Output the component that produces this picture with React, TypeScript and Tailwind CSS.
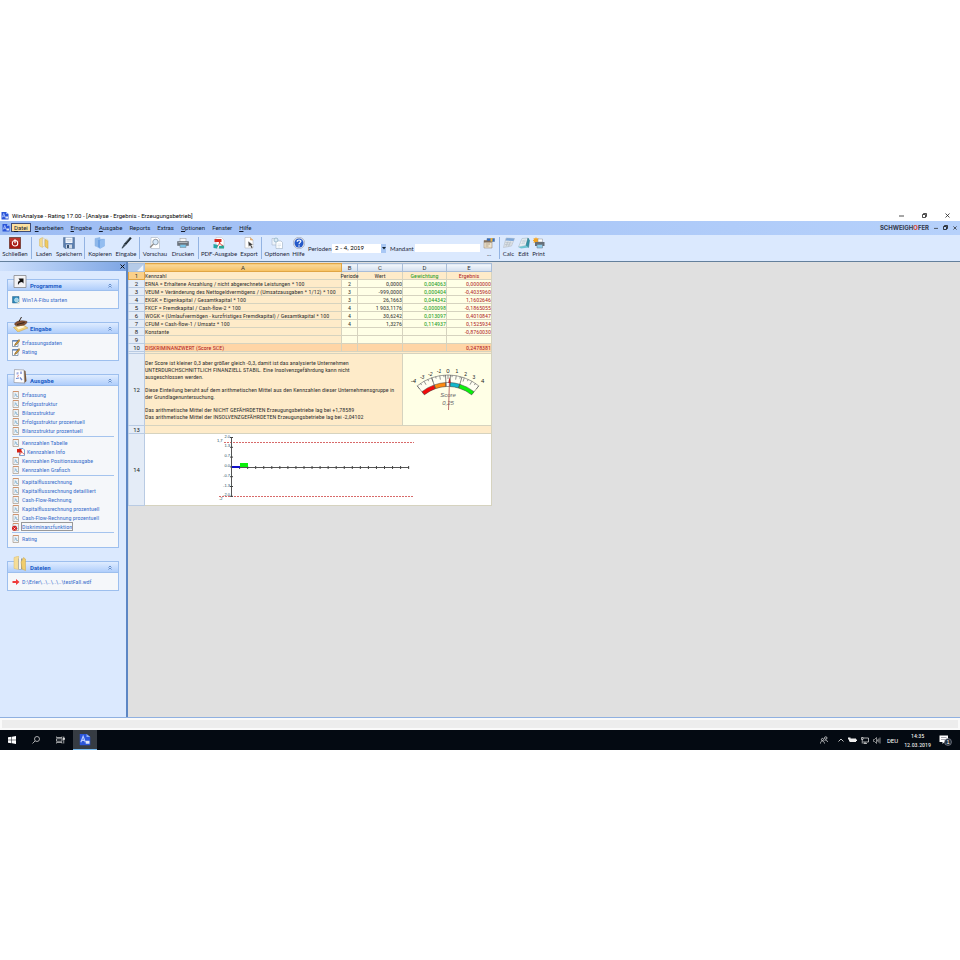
import React, { useState } from "react";
import type { ReactNode } from "react";

type IconName =
  | "power" | "folders" | "save" | "copy" | "pen" | "preview" | "printer" | "pdf" | "export"
  | "options" | "help" | "client" | "calc" | "book" | "sunprint";

const glyphs: Record<IconName, ReactNode> = {
  power: (
    <>
      <rect x="0" y="0" width="24" height="24" rx="3" fill="#a81a14" stroke="#6a625c" strokeWidth="2.5" />
      <rect x="2" y="2" width="20" height="8" fill="#c84a40" opacity=".6" />
      <circle cx="12" cy="12.5" r="5.5" fill="none" stroke="#fff" strokeWidth="2.2" />
      <path d="M12 4.500v8" stroke="#fff" strokeWidth="2.4" />
    </>
  ),
  folders: (
    <>
      <path d="M3 4l6-3v20l-6-3z" fill="#f3d98a" stroke="#d9b865" />
      <path d="M9 3l3-1v17H9z" fill="#fff" stroke="#c7b68a" />
      <path d="M14 5l6 2v16l-6-4z" fill="#f0cb63" stroke="#c9a040" />
      <path d="M15 3l4 1v4" fill="none" stroke="#e8dcb4" />
    </>
  ),
  save: (
    <>
      <path d="M1 1h22v22H4l-3-3z" fill="#5c7fae" stroke="#4b6890" />
      <rect x="5" y="1" width="14" height="11" fill="#f4f8ff" />
      <path d="M7 5h10M7 8h10" stroke="#9ab" />
      <rect x="6" y="15" width="12" height="8" fill="#cfd9e6" />
      <rect x="8" y="16" width="4" height="6" fill="#385274" />
    </>
  ),
  copy: (
    <>
      <path d="M2 3l10-2v20L2 18z" fill="#8fb8ea" stroke="#8ab0e2" />
      <path d="M7 5l14-1v14l-9 5-5-3z" fill="#6fa3e4" stroke="#9cc0ee" />
      <path d="M12 7l9-3v14l-9 5z" fill="#93bdf0" />
    </>
  ),
  pen: (
    <>
      <path d="M20 0l3.500 2.500L12 16l-4-2.500z" fill="#1f2a33" />
      <path d="M8 13.500l4 2.500-7 7-2-.5z" fill="#3c4a56" />
      <path d="M18 3l-7 9" stroke="#8fa0ad" />
    </>
  ),
  preview: (
    <>
      <path d="M4 1h13l4 4v18H4z" fill="#fff" stroke="#9aa4b0" />
      <circle cx="13" cy="10" r="5.5" fill="#d6e8fa" stroke="#7c8b9a" strokeWidth="1.6" />
      <path d="M9 14l-7 7" stroke="#8e8a86" strokeWidth="2.4" />
    </>
  ),
  printer: (
    <>
      <rect x="6" y="3" width="12" height="7" fill="#f7f7f7" stroke="#9a9a9a" />
      <path d="M1 9h22v8H1z" fill="#6b737c" stroke="#5d646c" />
      <path d="M3 11h18" stroke="#c8ced4" strokeWidth="1.5" />
      <path d="M6 15h12v6H6z" fill="#79c3e8" stroke="#768088" />
    </>
  ),
  pdf: (
    <>
      <path d="M6 1h11l5 5v16H6z" fill="#fff" stroke="#b9b9b9" />
      <path d="M3 4h14v6H3z" fill="#d92c20" />
      <path d="M8 19c3-2 5-5 5-9 1 4 3 6 7 7" fill="none" stroke="#d92c20" strokeWidth="2" />
      <path d="M1 14l9 2-2 7-7-1z" fill="#26a6a6" />
      <path d="M12 18l10-1v6H12z" fill="#2aa894" />
    </>
  ),
  export: (
    <>
      <path d="M4 1h11l5 5v16H4z" fill="#fff" stroke="#a7a7a7" />
      <path d="M15 1v5h5" fill="#f6b873" stroke="#c78d4c" />
      <path d="M10 8l1 12 3-3 3 6 3-1-3-6h4z" fill="#3a3a3a" stroke="#fff" />
    </>
  ),
  options: (
    <>
      <path d="M2 3h10v13H2z" fill="#edf3fa" stroke="#9aabc0" />
      <path d="M10 8h10l3 3v12H10z" fill="#fff" stroke="#8ea3b5" />
      <circle cx="10" cy="6" r="4" fill="#dcebf5" stroke="#8eb0c4" strokeWidth="1.5" />
      <path d="M13 14h7M13 17h7M13 20h5" stroke="#c3d1df" />
    </>
  ),
  help: (
    <>
      <circle cx="12" cy="12" r="11.5" fill="#dfe3ea" stroke="#8b93a6" />
      <circle cx="12" cy="12" r="9" fill="#2358c9" />
      <path d="M5 9a8 7 0 0 1 14 0" fill="#7ea5ef" opacity=".7" />
      <path d="M8.500 9.500c0-5 7.500-4.500 7-.5-.3 2.300-3.500 2.500-3.500 5.500" fill="none" stroke="#fff" strokeWidth="2.200" />
      <circle cx="12" cy="18" r="1.500" fill="#fff" />
    </>
  ),
  client: (
    <>
      <path d="M2 7h16v15H2z" fill="#eee4cf" stroke="#8c7a62" />
      <path d="M8 3h15v6H8z" fill="#2c6ecb" stroke="#5c6f85" />
      <path d="M2 7h13l3 4H2z" fill="#7e6d5d" />
      <path d="M5 14h9M5 18h6" stroke="#a08e75" strokeWidth="1.500" />
      <path d="M15 2h4v7h-4z" fill="#efb23a" />
    </>
  ),
  calc: (
    <>
      <path d="M6 2l17 1-6 15-16 3z" fill="#dfe4e9" stroke="#aab3bd" />
      <path d="M7 2l16 1-2 5-16-1z" fill="#7ea7d8" />
      <path d="M5 11l12 1M4 15l11 1M10 9l-4 10M15 9l-4 10" stroke="#b3bcc5" strokeWidth="1.300" />
    </>
  ),
  book: (
    <>
      <path d="M8 3l12-1-4 15-15 3z" fill="#e5edf2" stroke="#9eb2be" />
      <path d="M20 2l3 5-2 14-5-4z" fill="#3494a8" stroke="#25707f" />
      <path d="M1 20l15-3 5 4-15 2z" fill="#6fc5d2" />
      <path d="M9 7l7-1M8 10l7-1M7 13l7-1" stroke="#a9bac5" />
    </>
  ),
  sunprint: (
    <>
      <path d="M6 0l1.500 3L11 2l-1 3 3 2-3 1.500 1 3.500-3.500-1L6 14l-2-3-3 1 1-3.500L-1 7l3-2-1-3 3.500 1z" fill="#f4a522" />
      <path d="M10 4h9v6h-9z" fill="#fff" stroke="#8d8d8d" />
      <path d="M4 10h19v8H4z" fill="#666e77" />
      <path d="M8 15h11v7H8z" fill="#8fcdec" stroke="#6c757d" />
    </>
  ),
};

function Icon({ name }: { name: IconName }) {
  return (
    <svg viewBox="0 0 24 24" className="size-3 shrink-0" aria-hidden="true">
      {glyphs[name]}
    </svg>
  );
}

function AppLogo({ className }: { className: string }) {
  return (
    <svg viewBox="0 0 16 16" className={className} aria-hidden="true">
      <path d="M1 0h9l5 4v11H1z" fill="#2b55d8" />
      <path d="M2.500 11l3-8 3 8M3.500 8.500h4" fill="none" stroke="#b9ccff" strokeWidth="1.500" />
      <path d="M10 0v4h5" fill="#8fb0f5" />
      <path d="M9 9h5v4H9z" fill="#dfe6f5" />
    </svg>
  );
}

function Tool({ icon, label, width }: { icon: IconName; label: string; width: string }) {
  return (
    <button type="button" className={`flex shrink-0 flex-col items-center gap-px whitespace-nowrap pt-0.5 ${width}`}>
      <Icon name={icon} />
      <span className="leading-2">{label}</span>
    </button>
  );
}

function Sep() {
  return <span className="mx-px my-0.5 w-px shrink-0 bg-[#93b3e2]" />;
}

function Toolbar() {
  const [client, setClient] = useState("");
  return (
    <div className="flex h-[27px] shrink-0 border-b border-[#64809c] bg-[#dbe9fe] font-['Lato','Roboto',sans-serif] text-[6px] text-[#1c2638]">
      <Tool icon="power" label="Schließen" width="w-[30px]" />
      <Sep />
      <Tool icon="folders" label="Laden" width="w-[22px]" />
      <Tool icon="save" label="Speichern" width="w-[28px]" />
      <Sep />
      <Tool icon="copy" label="Kopieren" width="w-[28px]" />
      <Tool icon="pen" label="Eingabe" width="w-6" />
      <Sep />
      <Tool icon="preview" label="Vorschau" width="w-[28px]" />
      <Tool icon="printer" label="Drucken" width="w-[28px]" />
      <Sep />
      <Tool icon="pdf" label="PDF-Ausgabe" width="w-[38px]" />
      <Tool icon="export" label="Export" width="w-[22px]" />
      <Sep />
      <Tool icon="options" label="Optionen" width="w-[28px]" />
      <Tool icon="help" label="Hilfe" width="w-[15px]" />
      <div className="flex items-center pl-0.5">
        <label htmlFor="perioden" className="w-6">Perioden</label>
        <div className="relative flex w-[54px]">
          <select id="perioden" className="h-[9px] w-full appearance-none bg-white pl-[3px] leading-2 text-black">
            <option>2 - 4, 2019</option>
          </select>
          <span className="pointer-events-none absolute right-0 top-0 flex h-[9px] w-[5px] items-center justify-center bg-[#a9c8f5]">
            <svg viewBox="0 0 4 4" className="size-1"><path d="M0 1h4L2 3.500z" fill="#123" /></svg>
          </span>
        </div>
        <label htmlFor="mandant" className="w-[29px] pl-1">Mandant</label>
        <input
          id="mandant"
          value={client}
          onChange={(e) => setClient(e.target.value)}
          className="h-2 w-[65px] bg-white px-0.5 outline-none"
        />
      </div>
      <Tool icon="client" label="..." width="w-[18px]" />
      <Sep />
      <Tool icon="calc" label="Calc" width="w-[15px]" />
      <Tool icon="book" label="Edit" width="w-[15px]" />
      <Tool icon="sunprint" label="Print" width="w-[15px]" />
    </div>
  );
}

type ItemIcon = "report" | "edit" | "program" | "pdf" | "error" | "arrow";

function ItemGlyph({ kind }: { kind: ItemIcon }) {
  return (
    <svg viewBox="0 0 16 16" className="size-2 shrink-0" aria-hidden="true">
      {(kind === "report" || kind === "error") && (
        <>
          <path d="M2 1h11v14H2z" fill="#eef2f6" stroke="#a6998a" strokeWidth="1.400" />
          <path d="M2 1h11" stroke="#d48a5c" strokeWidth="1.600" />
          <path d="M5 6h3l1 5h3M5 11l3-5" fill="none" stroke="#8fb9d4" strokeWidth="1.800" />
        </>
      )}
      {kind === "error" && (
        <>
          <circle cx="5" cy="10.500" r="5" fill="#d42020" />
          <path d="M3 9l4 4M7 9l-4 4" stroke="#fff" strokeWidth="1.200" />
        </>
      )}
      {kind === "edit" && (
        <>
          <path d="M1 3h11v12H1z" fill="#fff" stroke="#5f7896" strokeWidth="1.400" />
          <path d="M1 3h11v2H1z" fill="#3d6db5" />
          <path d="M14 1l2 2-8 9-3 1 1-3z" fill="#e5a632" stroke="#4a3a20" />
        </>
      )}
      {kind === "program" && (
        <>
          <path d="M1 1h13v13H1z" fill="#2c86b8" stroke="#296388" />
          <circle cx="9" cy="8" r="4" fill="#9fcfe6" stroke="#dff" />
          <path d="M8 15l7-5v5z" fill="#e9e4d0" />
        </>
      )}
      {kind === "pdf" && (
        <>
          <path d="M5 1h7l3 3v11H5z" fill="#fff" stroke="#4a7cc0" strokeWidth="1.400" />
          <path d="M0 2h9v7H0z" fill="#d62318" />
          <path d="M5 14c3-3 4-6 4-8 1 4 3 5 6 6" fill="none" stroke="#d62318" strokeWidth="1.400" />
        </>
      )}
      {kind === "arrow" && <path d="M1 6h7V2l7 6-7 6v-4H1z" fill="#ef3b3b" />}
    </svg>
  );
}

type Entry = { icon: ItemIcon; text: string; indent?: boolean; active?: boolean } | "line";

const report = (text: string): Entry => ({ icon: "report", text });

const panels: { title: string; art: ReactNode; entries: Entry[] }[] = [
  {
    title: "Programme",
    art: (
      <>
        <path d="M2 3h24v24H2z" fill="#f3f3f5" stroke="#88898d" strokeWidth="1.600" />
        <path d="M10 22c-1-6 1-8 4-9l-3-4h10v10l-3-3c-4 0-6 2-8 6z" fill="#111" />
      </>
    ),
    entries: [{ icon: "program", text: "Win1A-Fibu starten" }],
  },
  {
    title: "Eingabe",
    art: (
      <>
        <path d="M1 21l18-6 11 7-20 8z" fill="#f2d37c" stroke="#c8a14e" />
        <path d="M7 20l12-3 5 3-13 5z" fill="#fff7df" />
        <path d="M3 14c4-7 15-8 25-5 0 5-6 8-13 8-4 1-10 2-12-3z" fill="#845032" stroke="#4c2c1a" />
        <path d="M12 9l5-9M8 15l15-4" stroke="#33261d" strokeWidth="2" />
      </>
    ),
    entries: [{ icon: "edit", text: "Erfassungsdaten" }, { icon: "edit", text: "Rating" }],
  },
  {
    title: "Ausgabe",
    art: (
      <>
        <path d="M20 2l5 2 2 20-5 5z" fill="#7a5636" />
        <path d="M3 1l19 1 1 26-21-1z" fill="#fdfdff" stroke="#8c8b92" strokeWidth="1.200" />
        <path d="M7 7l4-1v5H7zM14 5h4v5h-4z" fill="#a3aedf" />
        <path d="M6 19l6-1M14 17l4 5" stroke="#6d87cf" strokeWidth="2.500" />
        <path d="M8 15l4-2" stroke="#e09090" strokeWidth="2" />
      </>
    ),
    entries: [
      report("Erfassung"),
      report("Erfolgsstruktur"),
      report("Bilanzstruktur"),
      report("Erfolgsstruktur prozentuell"),
      report("Bilanzstruktur prozentuell"),
      "line",
      report("Kennzahlen Tabelle"),
      { icon: "pdf", text: "Kennzahlen Info", indent: true },
      report("Kennzahlen Positionsausgabe"),
      report("Kennzahlen Grafisch"),
      "line",
      report("Kapitalflussrechnung"),
      report("Kapitalflussrechnung detailliert"),
      report("Cash-Flow-Rechnung"),
      report("Kapitalflussrechnung prozentuell"),
      report("Cash-Flow-Rechnung prozentuell"),
      { icon: "error", text: "Diskriminanzfunktion", active: true },
      "line",
      report("Rating"),
    ],
  },
  {
    title: "Dateien",
    art: (
      <>
        <path d="M2 3l9-3v27l-9-2z" fill="#f5dd98" stroke="#dcbd6c" />
        <path d="M11 5h8v22h-8z" fill="#8c97a4" />
        <path d="M12 4h4v22h-4z" fill="#f3f4f6" />
        <path d="M16 12l5-9 4 3v23l-7-3z" fill="#f0cd6c" stroke="#c8a44c" />
      </>
    ),
    entries: [{ icon: "arrow", text: "D:\\Erler\\..\\..\\..\\..\\testFall.wdf" }],
  },
];

function Panel({ title, art, entries }: { title: string; art: ReactNode; entries: Entry[] }) {
  return (
    <section className="relative border border-[#9dbfee] bg-[#f5f7fa]">
      <svg viewBox="0 0 30 30" className="absolute -top-1.5 left-[5px] size-[15px]" aria-hidden="true">{art}</svg>
      <h2 className="flex h-[11px] items-center justify-between border-b border-[#9dbfee] bg-gradient-to-b from-[#dfecff] to-[#b0cefb] pl-[22px] pr-1.5 font-['Roboto',sans-serif] text-[6px] font-bold text-[#215dc6]">
        {title}
        <svg viewBox="0 0 8 10" className="h-[5px] w-1" aria-hidden="true">
          <path d="M1 5l3-3 3 3M1 9l3-3 3 3" fill="none" stroke="#4674b8" strokeWidth="1.500" />
        </svg>
      </h2>
      <ul className="px-1 py-1">
        {entries.map((e, i) =>
          e === "line" ? (
            <li key={i} className="my-px h-px bg-[#a5c4ee]" />
          ) : (
            <li key={i} className={`flex h-[9px] items-center whitespace-nowrap ${e.indent ? "pl-[5px]" : ""}`}>
              <a href="#" className="flex items-center gap-0.5">
                <ItemGlyph kind={e.icon} />
                <span className={e.active ? "outline outline-[#999]" : ""}>{e.text}</span>
              </a>
            </li>
          ),
        )}
      </ul>
    </section>
  );
}

function Sidebar() {
  return (
    <aside className="w-32 shrink-0 border-r-2 border-[#5c86c4] bg-[#dbe9fe] font-['Roboto_Condensed','Roboto',sans-serif] text-[6px] leading-[7px] text-[#3b70cc]">
      <div className="flex h-[9px] items-center justify-end bg-gradient-to-r from-[#cfe1fc] to-[#7ea6e4]">
        <button type="button" aria-label="Schließen" className="mr-px">
          <svg viewBox="0 0 5 5" className="size-[5px]"><path d="M.5.5l4 4M4.500.5l-4 4" stroke="#111" /></svg>
        </button>
      </div>
      <div className="flex flex-col gap-[13px] px-[7px] pt-2">
        {panels.map((p) => <Panel key={p.title} {...p} />)}
      </div>
    </aside>
  );
}

const rows: [string, string, string, string, string][] = [
  ["ERNA = Erhaltene Anzahlung / nicht abgerechnete Leistungen * 100", "2", "0,0000", "0,004063", "0,0000000"],
  ["VEUM = Veränderung des Nettogeldvermögens / (Umsatzausgaben * 1/12) * 100", "3", "-999,0000", "0,000404", "-0,4035960"],
  ["EKGK = Eigenkapital / Gesamtkapital * 100", "3", "26,1663", "0,044342", "1,1602646"],
  ["FKCF = Fremdkapital / Cash-flow-2 * 100", "4", "1 903,1176", "-0,000098", "-0,1865055"],
  ["WOGK = (Umlaufvermögen - kurzfristiges Fremdkapital) / Gesamtkapital * 100", "4", "30,6242", "0,013097", "0,4010847"],
  ["CFUM = Cash-flow-1 / Umsatz * 100", "4", "1,3276", "0,114937", "0,1525934"],
  ["Konstante", "", "", "", "-0,8760030"],
  ["", "", "", "", ""],
];

const polar = (value: number, r: number) => {
  const a = (value / 4) * 0.68;
  return [45 + r * Math.sin(a), 70 - r * Math.cos(a)] as const;
};

const band = (from: number, to: number, r1: number, r2: number) => {
  const [a, b] = polar(from, r2);
  const [c, d] = polar(to, r2);
  const [e, f] = polar(to, r1);
  const [g, h] = polar(from, r1);
  return `M${a} ${b}A${r2} ${r2} 0 0 1 ${c} ${d}L${e} ${f}A${r1} ${r1} 0 0 0 ${g} ${h}Z`;
};

const gaugeBands: [number, number, string][] = [
  [-4, -2, "#f30a0a"],
  [-2, -0.3, "#ff8a10"],
  [-0.3, 0.3, "#ffffff"],
  [0.3, 1.7, "#12b8cc"],
  [1.7, 4, "#0bf00b"],
];

function Gauge() {
  const values = [-4, -3, -2, -1, 0, 1, 2, 3, 4];
  return (
    <svg viewBox="0 0 89 71" className="mx-auto block h-[71px] w-[89px] font-['Liberation_Sans',sans-serif]" role="img" aria-label="Score 0,25">
      <path d={band(-4, 4, 38, 49)} fill="#fffff2" stroke="#777" strokeWidth=".7" />
      {Array.from({ length: 17 }, (_, i) => -4 + i / 2).map((v) => {
        const [x1, y1] = polar(v, 49);
        const [x2, y2] = polar(v, v % 1 ? 47 : 45);
        return <line key={v} x1={x1} y1={y1} x2={x2} y2={y2} stroke="#666" strokeWidth=".7" />;
      })}
      {gaugeBands.map(([a, b, c]) => <path key={a} d={band(a, b, 37.5, 41.5)} fill={c} stroke="#444" strokeWidth=".5" />)}
      {[-2, -0.3, 0.3, 1.7].map((v) => {
        const [x1, y1] = polar(v, 49);
        const [x2, y2] = polar(v, 38);
        return <line key={v} x1={x1} y1={y1} x2={x2} y2={y2} stroke="#555" strokeWidth=".7" />;
      })}
      {values.map((v) => {
        const [x, y] = polar(v, Math.abs(v) === 4 ? 55 : 53);
        return (
          <text key={v} x={x} y={y + 1.500} textAnchor="middle" fontSize={v === 0 || Math.abs(v) === 4 ? 6 : 5} fontStyle={v < 0 ? "italic" : "normal"} fill="#222">
            {v}
          </text>
        );
      })}
      <text x="45" y="43" textAnchor="middle" fontSize="6" fontStyle="italic" fill="#666">Score</text>
      <text x="45" y="51" textAnchor="middle" fontSize="6" fontStyle="italic" fill="#666">0,25</text>
      <path d="M46.500 26l-1 30" stroke="#b05050" strokeWidth=".8" />
      <path d="M46.500 23l1.200 6h-2.400z" fill="#c02020" />
    </svg>
  );
}

function ScoreChart() {
  const marks = ["2.0", "1.3", "0.7", "0.0", "-0.7", "-1.3", "-2.0"];
  return (
    <svg viewBox="0 0 346 71" className="block h-[71px] w-full font-['Liberation_Sans',sans-serif]" role="img" aria-label="Score je Periode">
      <path d="M79 8.500h190M74 62.500h195" stroke="#d86a6a" strokeDasharray="2 1" />
      <path d="M86.500 3v60M86 33.500h178" stroke="#555" />
      {marks.map((m, i) => (
        <g key={m}>
          <line x1="85" x2="88" y1={3.500 + i * 9.800} y2={3.500 + i * 9.800} stroke="#444" />
          <text x="85" y={3.500 + i * 9.800} textAnchor="end" fontSize="4" fill="#234a58">{m}</text>
        </g>
      ))}
      {Array.from({ length: 22 }, (_, i) => (
        <line key={i} x1={94.600 + i * 8.050} x2={94.600 + i * 8.050} y1="32" y2="35" stroke="#444" />
      ))}
      <rect x="87" y="32" width="8" height="2" fill="#1010c8" />
      <rect x="95" y="29" width="8" height="4" fill="#0bf00b" />
      <text x="72" y="8" fontSize="4" fill="#234a58">1,7</text>
      <text x="74" y="66" fontSize="4" fill="#234a58">-2</text>
    </svg>
  );
}

const rowHead = "border border-t-[#b9cbe3] border-b-[#b9cbe3] border-l-[#c5d4e8] border-r-[#b9cbe3] bg-[#e4ecf7] text-center font-normal text-[#222]";
const grid = "border border-[#d6d3bf]";

function Sheet() {
  return (
    <table className="w-[363px] table-fixed border-collapse whitespace-nowrap bg-white font-['Roboto_Condensed','Roboto',sans-serif] text-[6px] leading-[7px] text-[#333]">
      <colgroup>
        <col className="w-4" />
        <col className="w-[197px]" />
        <col className="w-4" />
        <col className="w-[45px]" />
        <col className="w-11" />
        <col className="w-[45px]" />
      </colgroup>
      <thead>
        <tr className="h-2">
          <th className="border border-[#a9c0de] bg-[#b5cbe8] p-0">
            <svg viewBox="0 0 14 7" className="ml-auto block h-1.5 w-3"><path d="M13 0v7H6z" fill="#eef4fc" /></svg>
          </th>
          {["A", "B", "C", "D", "E"].map((c) => (
            <th
              key={c}
              scope="col"
              className={`border p-0 font-['Roboto',sans-serif] font-normal ${c === "A" ? "border-[#e0a545] bg-gradient-to-b from-[#f9d99b] to-[#f5bf5f]" : "border-[#a9bdd8] bg-gradient-to-b from-[#f3f7fc] to-[#d3dfee]"}`}
            >
              {c}
            </th>
          ))}
        </tr>
      </thead>
      <tbody>
        <tr className="h-2 bg-[#feebc9]">
          <th scope="row" className="border border-[#e0a545] bg-[#fad08a] p-0 font-['Roboto',sans-serif] font-normal">1</th>
          <td className={`${grid} p-0`}>Kennzahl</td>
          <td className={`${grid} p-0`}><div className="flex justify-center">Periode</div></td>
          <td className={`${grid} p-0 text-center`}>Wert</td>
          <td className={`${grid} p-0 text-center text-[#1d9a1d]`}>Gewichtung</td>
          <td className={`${grid} p-0 text-center text-[#b02a2a]`}>Ergebnis</td>
        </tr>
        {rows.map(([a, b, c, d, e], i) => (
          <tr key={i} className="h-2 bg-[#ffffe6]">
            <th scope="row" className={`${rowHead} p-0 font-['Roboto',sans-serif]`}>{i + 2}</th>
            <td className={`${grid} bg-[#feebc9] p-0`}>{a}</td>
            <td className={`${grid} p-0 text-center`}>{b}</td>
            <td className={`${grid} p-0 text-right`}>{c}</td>
            <td className={`${grid} p-0 text-right text-[#1d9a1d]`}>{d}</td>
            <td className={`${grid} p-0 text-right text-[#b02a2a]`}>{e}</td>
          </tr>
        ))}
        <tr className="h-2 bg-[#ffd5a6] text-[#b32020]">
          <th scope="row" className={`${rowHead} p-0 font-['Roboto',sans-serif]`}>10</th>
          <td className={`${grid} p-0`}>DISKRIMINANZWERT (Score SCE)</td>
          <td className={`${grid} p-0`} />
          <td className={`${grid} p-0`} />
          <td className={`${grid} p-0`} />
          <td className={`${grid} p-0 text-right`}>0,2478381</td>
        </tr>
        <tr className="h-0.5 bg-[#feebc9]">
          <th className={`${rowHead} p-0`} />
          <td colSpan={5} className={`${grid} p-0`} />
        </tr>
        <tr className="h-[72px] bg-[#feebc9]">
          <th scope="row" className={`${rowHead} p-0 font-['Roboto',sans-serif]`}>12</th>
          <td colSpan={3} className={`${grid} p-0`}>
            <div className="flex flex-col gap-1.5">
              <p>
                Der Score ist kleiner 0,3 aber größer gleich -0,3, damit ist das analysierte Unternehmen<br />
                UNTERDURCHSCHNITTLICH FINANZIELL STABIL. Eine Insolvenzgefährdung kann nicht<br />
                ausgeschlossen werden.
              </p>
              <p>
                Diese Einteilung beruht auf dem arithmetischen Mittel aus den Kennzahlen dieser Unternehmensgruppe in<br />
                der Grundlagenuntersuchung.
              </p>
              <p>
                Das arithmetische Mittel der NICHT GEFÄHRDETEN Erzeugungsbetriebe lag bei +1,78589<br />
                Das arithmetische Mittel der INSOLVENZGEFÄHRDETEN Erzeugungsbetriebe lag bei -2,04102
              </p>
            </div>
          </td>
          <td colSpan={2} className={`${grid} bg-[#ffffe6] p-0`}><Gauge /></td>
        </tr>
        <tr className="h-2 bg-[#feebc9]">
          <th scope="row" className={`${rowHead} p-0 font-['Roboto',sans-serif]`}>13</th>
          <td colSpan={5} className={`${grid} p-0`} />
        </tr>
        <tr className="h-[72px]">
          <th scope="row" className={`${rowHead} p-0 font-['Roboto',sans-serif]`}>14</th>
          <td colSpan={5} className={`${grid} p-0`}><ScoreChart /></td>
        </tr>
      </tbody>
    </table>
  );
}

function WindowGlyph({ kind, className }: { kind: "min" | "restore" | "close"; className: string }) {
  return (
    <svg viewBox="0 0 10 10" className={className} fill="none" stroke="currentColor" strokeWidth="1.600" aria-hidden="true">
      {kind === "min" && <path d="M0 6h10" />}
      {kind === "restore" && <path d="M1 3h6v6H1zM3 3V1h6v6H7" />}
      {kind === "close" && <path d="M1 1l8 8M9 1l-8 8" />}
    </svg>
  );
}

function TitleBar() {
  return (
    <header className="flex h-[11px] shrink-0 items-center gap-[3px] bg-white pl-px pr-2.5 font-['Roboto',sans-serif] text-[6px] text-black">
      <AppLogo className="size-2" />
      <h1 className="flex-1 whitespace-nowrap">WinAnalyse - Rating 17.00 - [Analyse - Ergebnis - Erzeugungsbetrieb]</h1>
      <div className="flex gap-[18px] text-[#222]">
        <button type="button" aria-label="Minimieren"><WindowGlyph kind="min" className="size-[5px]" /></button>
        <button type="button" aria-label="Wiederherstellen"><WindowGlyph kind="restore" className="size-[5px]" /></button>
        <button type="button" aria-label="Schließen"><WindowGlyph kind="close" className="size-[5px]" /></button>
      </div>
    </header>
  );
}

function MenuBar() {
  const items = ["Bearbeiten", "Eingabe", "Ausgabe", "Reports", "Extras", "Optionen", "Fenster", "Hilfe"];
  const plain = ["Reports", "Extras", "Fenster"];
  return (
    <nav className="flex h-3.5 shrink-0 items-center gap-[7px] bg-gradient-to-r from-[#9dbcf3] to-[#b6d1fb] pb-px pl-0.5 pr-[3px] font-['Roboto',sans-serif] text-[6px] text-[#10192b]">
      <AppLogo className="-mr-1.5 size-2" />
      <button type="button" className="-mr-[3px] border border-[#3f4b73] bg-[#fde1a0] px-0.5 leading-[7px]">
        <u>D</u>atei
      </button>
      {items.map((m) => (
        <button key={m} type="button" className="whitespace-nowrap">
          {plain.includes(m) ? m : <><u>{m[0]}</u>{m.slice(1)}</>}
        </button>
      ))}
      <div className="ml-auto flex items-center gap-[5px] text-[#111]">
        <span className="font-['Inter',sans-serif] font-bold text-[#353a4c]">SCHWEIGH<span className="text-[#e03a20]">O</span>FER</span>
        <button type="button" aria-label="Dokument minimieren"><WindowGlyph kind="min" className="size-1" /></button>
        <button type="button" aria-label="Dokument wiederherstellen"><WindowGlyph kind="restore" className="size-[5px]" /></button>
        <button type="button" aria-label="Dokument schließen"><WindowGlyph kind="close" className="size-1" /></button>
      </div>
    </nav>
  );
}

function Taskbar() {
  return (
    <footer className="flex h-5 shrink-0 items-center bg-[#040a12] font-['Roboto_Condensed','Roboto',sans-serif] text-[6px] text-white">
      <button type="button" aria-label="Start" className="flex w-6 justify-center">
        <svg viewBox="0 0 16 16" className="size-2" fill="#fff"><path d="M0 2.500l7-1v6H0zM8 1.300L16 0v7.500H8zM0 8.500h7v6l-7-1zM8 8.500h8V16l-8-1.300z" /></svg>
      </button>
      <button type="button" aria-label="Suche" className="flex w-6 justify-center">
        <svg viewBox="0 0 16 16" className="size-2" fill="none" stroke="#ddd" strokeWidth="1.500"><circle cx="10" cy="6" r="5" /><path d="M6 10l-5 5" /></svg>
      </button>
      <button type="button" aria-label="Aufgabenansicht" className="flex w-6 justify-center">
        <svg viewBox="0 0 18 16" className="h-2 w-[9px]" fill="none" stroke="#ddd" strokeWidth="1.400"><path d="M1 1v2h11V1M1 15v-2h11v2M1 5.500h11v5H1zM15.500 1v14" /><path d="M14 4h3v3h-3z" fill="#ddd" /></svg>
      </button>
      <button type="button" aria-label="WinAnalyse" className="ml-px flex h-5 w-6 items-center justify-center border-b border-[#76b9ed] bg-[#363c43]">
        <AppLogo className="size-3" />
      </button>
      <div className="ml-auto flex items-center gap-1 pr-2">
        <svg viewBox="0 0 16 16" className="mr-1.5 size-2" fill="none" stroke="#eee" strokeWidth="1.400"><circle cx="11.500" cy="4" r="2.500" /><circle cx="5" cy="7" r="2.200" /><path d="M1 15c0-7 7-7 8 0M9 9c3-2 6 0 6 3" /></svg>
        <svg viewBox="0 0 12 12" className="size-1.5" fill="none" stroke="#eee" strokeWidth="1.600"><path d="M1 9l5-5 5 5" /></svg>
        <svg viewBox="0 0 18 12" className="h-1.5 w-[9px]" fill="#eee"><path d="M4 3h12v7H4zM16 5h2v3h-2zM0 1h5v4H0zM2 5h2v4H2z" /></svg>
        <svg viewBox="0 0 16 14" className="h-[7px] w-2" fill="none" stroke="#eee" strokeWidth="1.400"><path d="M4 2h11v8H4M8 10v3M5 13h7M1 1h3v4H1zM2.500 5v8" /></svg>
        <svg viewBox="0 0 16 14" className="h-[7px] w-2" fill="none" stroke="#bbb" strokeWidth="1.400"><path d="M1 5h2l4-4v12L3 9H1zM9 5v4M11.500 3v8M14 1v12" /></svg>
        <span className="ml-0.5 font-['Roboto',sans-serif]">DEU</span>
        <time className="ml-0.5 flex flex-col items-center leading-[9px]"><span>14:35</span><span>12.03.2019</span></time>
        <svg viewBox="0 0 26 24" className="ml-1 h-3 w-[13px] font-['Liberation_Sans',sans-serif]">
          <path d="M1 3h17v13h-7l-4 4v-4H1z" fill="#fff" />
          <path d="M4 7h11M4 11h8" stroke="#556" />
          <circle cx="18" cy="16" r="7" fill="#26303a" stroke="#aab" />
          <text x="18" y="20" fontSize="11" textAnchor="middle" fill="#fff">1</text>
        </svg>
      </div>
    </footer>
  );
}

export default function App() {
  return (
    <div className="flex min-h-screen items-center bg-white font-['Roboto',sans-serif]">
      <div className="flex aspect-video w-full flex-col">
        <TitleBar />
        <MenuBar />
        <Toolbar />
        <div className="flex flex-1 border-b border-[#8fb0e0] bg-[#e0e0e0]">
          <Sidebar />
          <main className="min-w-0 flex-1 pt-px"><Sheet /></main>
        </div>
        <div className="h-3 shrink-0 border-2 border-[#fafafa] bg-[#ededed]" />
        <Taskbar />
      </div>
    </div>
  );
}
